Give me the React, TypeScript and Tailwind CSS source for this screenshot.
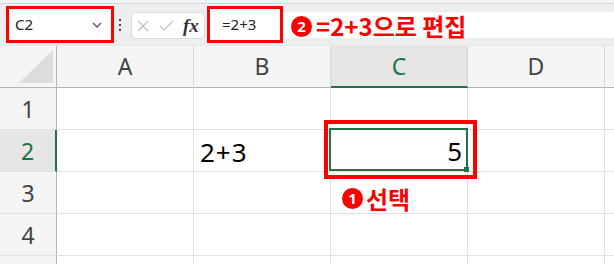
const font = "font-['Noto_Sans','Noto_Sans_CJK_KR',sans-serif]"

function Badge({ n }: { n: string }) {
  return (
    <span className="w-[21px] h-[21px] rounded-full bg-[#ff0000] text-white text-[15px] font-bold leading-none flex items-center justify-center shrink-0">
      {n}
    </span>
  )
}

function FormulaBar() {
  return (
    <div className="h-[40px] bg-[#eceef0] flex items-start pt-[2px] pl-[6px]">
      {/* Name box */}
      <div className="w-[108px] h-[37px] border-[3px] border-[#ff0000] bg-white flex items-center justify-between pl-[6px] pr-[9px]">
        <span className="text-[15px] text-[#222]">C2</span>
        <svg width="10" height="6" viewBox="0 0 10 6">
          <polyline points="1,1 5,5 9,1" fill="none" stroke="#555" strokeWidth="1.3" />
        </svg>
      </div>

      <div className="w-[17px] h-[37px] flex flex-col justify-center gap-[3px] pl-[5px]">
        <span className="w-[2px] h-[2px] bg-[#444]" />
        <span className="w-[2px] h-[2px] bg-[#444]" />
        <span className="w-[2px] h-[2px] bg-[#444]" />
      </div>

      {/* Cancel / enter / fx */}
      <div className="mt-[6px] h-[27px] w-[74px] rounded-[5px] border border-[#dcdcdc] bg-white flex items-center pl-[5px]">
        <svg width="12" height="12" viewBox="0 0 12 12">
          <path d="M1 1L11 11M11 1L1 11" stroke="#bdbdbd" strokeWidth="1.2" />
        </svg>
        <svg width="15" height="11" viewBox="0 0 15 11" className="ml-[10px]">
          <polyline points="1,6 5,10 14,1" fill="none" stroke="#bdbdbd" strokeWidth="1.2" />
        </svg>
        <span className="ml-[9px] font-['Liberation_Serif',serif] italic font-semibold text-[19px] text-[#333] leading-none">fx</span>
      </div>

      {/* Formula input */}
      <div className="ml-[2px] w-[76px] h-[37px] border-[3px] border-[#ff0000] bg-white flex items-center pl-[12px]">
        <span className="text-[15px] text-[#222]">=2+3</span>
      </div>
      <div className="mt-[6px] flex-1 h-[26px] bg-white flex items-center pl-[8px] pt-[2px]">
        <Badge n="2" />
        <span className="ml-[4px] text-[24px] font-bold text-[#ff0000] leading-none font-['Noto_Sans_CJK_KR',sans-serif]">
          =2+3으로 편집
        </span>
      </div>
    </div>
  )
}

const colLetters = ['A', 'B', 'C', 'D']

function HeaderRow() {
  return (
    <div className="h-[42px] flex bg-[#f5f5f5]">
      <div className="w-[57px] h-[42px] border-r border-b border-[#b5b5b5]">
        <svg width="56" height="41" viewBox="0 0 56 41">
          <polygon points="53,4 53,37 19,37" fill="#dcdcdc" />
        </svg>
      </div>
      {colLetters.map((c) =>
        c === 'C' ? (
          <div key={c} className="w-[137px] h-[42px] bg-[#e6e6e6] border-r border-[#d6d6d6] border-b-2 border-b-[#217346] flex items-center justify-center text-[23px] text-[#217346]">
            {c}
          </div>
        ) : (
          <div key={c} className="w-[137px] h-[42px] border-r border-[#d6d6d6] border-b border-b-[#b5b5b5] flex items-center justify-center text-[23px] text-[#444]">
            {c}
          </div>
        )
      )}
      <div className="flex-1 h-[42px] border-b border-[#b5b5b5]" />
    </div>
  )
}

function Row({ n, children }: { n?: number; children?: React.ReactNode }) {
  const active = n === 2
  return (
    <div className="h-[42px] flex">
      <div
        className={
          active
            ? 'w-[57px] h-[42px] bg-[#e6e6e6] border-r-2 border-[#217346] border-b border-b-[#e1e1e1] flex items-center justify-center pt-[2px] text-[23px] text-[#217346]'
            : 'w-[57px] h-[42px] bg-[#f5f5f5] border-r border-[#b5b5b5] border-b border-b-[#e1e1e1] flex items-center justify-center pt-[2px] text-[23px] text-[#444]'
        }
      >
        {n}
      </div>
      {children ?? (
        <>
          <div className="w-[137px] h-[42px] border-r border-b border-[#e1e1e1]" />
          <div className="w-[137px] h-[42px] border-r border-b border-[#e1e1e1]" />
          <div className="w-[137px] h-[42px] border-r border-b border-[#e1e1e1]" />
          <div className="w-[137px] h-[42px] border-r border-b border-[#e1e1e1]" />
        </>
      )}
      <div className="flex-1 h-[42px] border-b border-[#e1e1e1]" />
    </div>
  )
}

export default function App() {
  return (
    <div className={`w-[614px] h-[264px] overflow-hidden bg-white ${font}`}>
      <div className="h-[4px] bg-[#f2f3f5] border-b border-[#d4d6da]" />
      <FormulaBar />
      <div className="h-[2px] bg-[#e8ecec]" />

      <HeaderRow />
      <Row n={1} />
      <Row n={2}>
        <div className="w-[137px] h-[42px] border-r border-b border-[#e1e1e1]" />
        <div className="w-[137px] h-[42px] border-r border-b border-[#e1e1e1] flex items-center pl-[6px] pt-[4px] text-[26px] tracking-[1px] text-black">
          2+3
        </div>
        {/* selected cell */}
        <div className="relative w-[137px] h-[42px] border-r border-b border-[#e1e1e1] flex items-center justify-end pr-[5px] pt-[2px] text-[26px] text-black">
          5
          <div className="absolute -left-[2px] -top-[2px] -right-[1px] bottom-0 border-2 border-[#217346]" />
          <div className="absolute -right-[2px] -bottom-[1px] w-[5px] h-[5px] bg-[#217346]" />
          <div className="absolute z-10 -left-[7px] -top-[10px] -right-[10px] -bottom-[8px] border-4 border-[#ff0000]" />
        </div>
        <div className="w-[137px] h-[42px] border-r border-b border-[#e1e1e1]" />
      </Row>
      <Row n={3}>
        <div className="w-[137px] h-[42px] border-r border-b border-[#e1e1e1]" />
        <div className="w-[137px] h-[42px] border-r border-b border-[#e1e1e1]" />
        <div className="w-[137px] h-[42px] border-r border-b border-[#e1e1e1] flex items-center pl-[11px] pt-[12px]">
          <Badge n="1" />
          <span className="ml-[3px] text-[24px] font-bold text-[#ff0000] leading-none font-['Noto_Sans_CJK_KR',sans-serif]">
            선택
          </span>
        </div>
        <div className="w-[137px] h-[42px] border-r border-b border-[#e1e1e1]" />
      </Row>
      <Row n={4} />
      <Row />
    </div>
  )
}
